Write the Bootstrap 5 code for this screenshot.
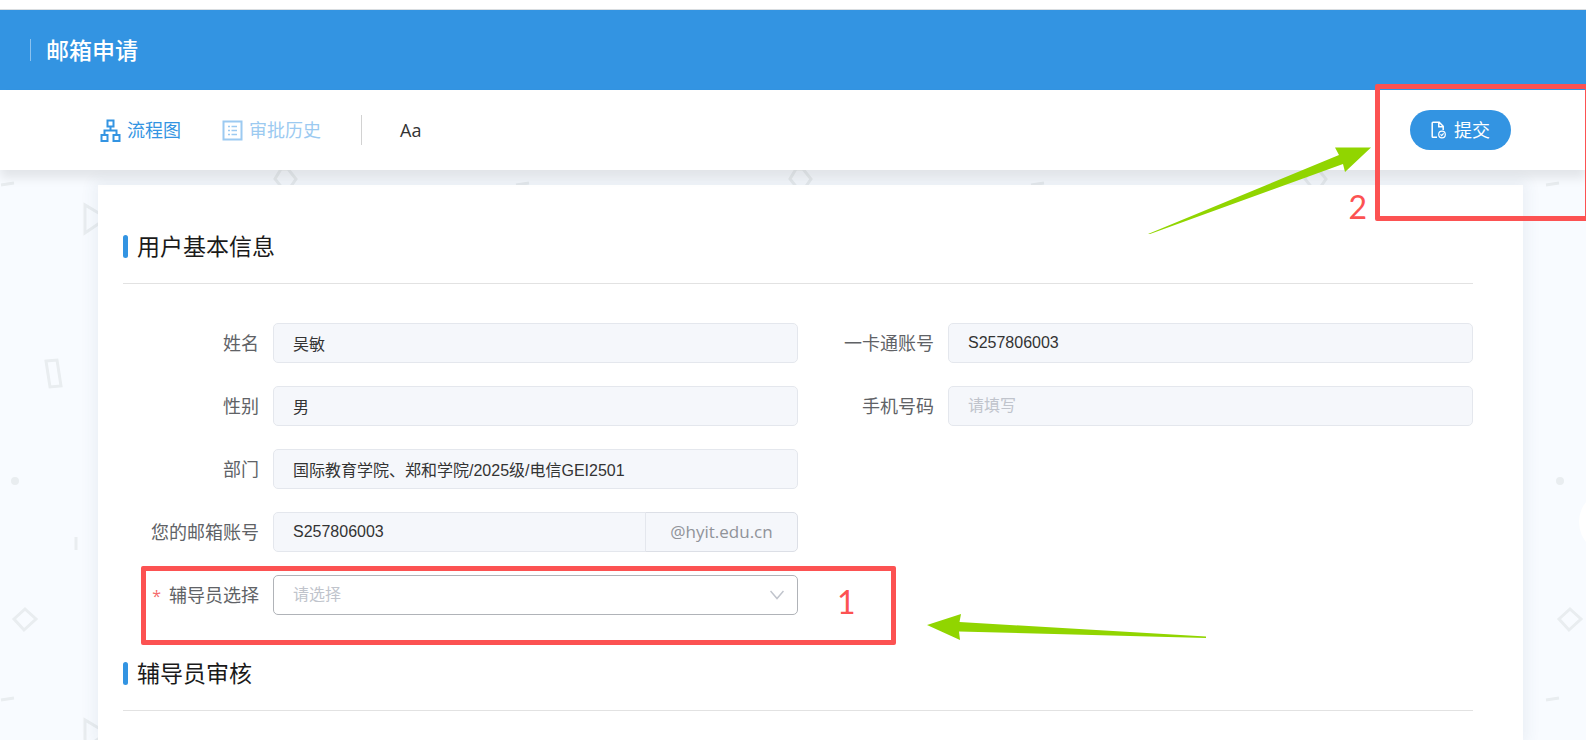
<!DOCTYPE html>
<html lang="zh-CN">
<head>
<meta charset="utf-8">
<meta name="viewport" content="width=device-width, initial-scale=1">
<title>邮箱申请</title>
<link href="https://cdn.jsdelivr.net/npm/bootstrap@5.3.0/dist/css/bootstrap.min.css" rel="stylesheet">
<style>
  :root { --brand: #3394e2; --mark-red: #fc5252; --mark-green: #91d500; }
  body { font-family: "Open Sans", "Noto Sans CJK SC", sans-serif; background: #fff; color: #1a1a1a; overflow-x: hidden; padding-top: 9px; }
  .app-header { height: 81px; border-top: 1px solid #d9dde0; background: var(--brand); color: #fff; padding-left: 30px; }
  .app-header h1 { font-size: 23px; line-height: 22px; font-weight: 500; border-left: 1px solid #8cc2ef; padding-left: 15px; margin: 0; }
  .toolbar { height: 80px; padding: 0 75px 0 100px; background: #fff; box-shadow: 0 8px 10px rgba(0, 0, 0, .09); z-index: 2; }
  .tool-btn { font-size: 18px; line-height: 24px; padding: 0; border: 0; background: none; color: var(--brand); display: flex; align-items: center; gap: 6px; }
  .tool-btn.is-off { color: #9ccaf1; margin-left: 41px; }
  .tool-sep { width: 1px; height: 30px; background: #d2d2d2; margin: 0 38px 0 40px; }
  .tool-btn.tool-font { color: #333; }
  .submit-btn { height: 40px; width: 101px; font-size: 18px; line-height: 24px; background: var(--brand); color: #fff; border: 0; }
  .submit-btn:hover { background: #2484d2; color: #fff; }
  .page-area { padding: 15px 63px 0 98px;
    background: #f8fbff url("data:image/svg+xml,%3Csvg xmlns='http://www.w3.org/2000/svg' width='515' height='515' fill='none' stroke='%23e9edf0' stroke-width='3'%3E%3Cpath d='M1 15l13-2M85 35v28l22-15zM46 191l11-1 4 26-11 1zM76 367v13M25 439l11 10-12 11-10-11zM281 -1l-6 10 8 10h6l7-10-8-10z'/%3E%3Ccircle cx='15' cy='311' r='2' stroke-width='4'/%3E%3C/svg%3E") 0 0 / 515px 515px; }
  .sheet { background: #fff; padding: 49px 50px 26px 25px; box-shadow: 0 0 14px 4px rgba(60, 80, 110, .07); }
  .sec-title { font-size: 23px; line-height: 24px; font-weight: 400; margin: 0; padding-bottom: 25px; border-bottom: 1px solid #e2e2e2; }
  .sec-title::before { content: ""; width: 5px; height: 23px; border-radius: 3px; background: var(--brand); margin-right: 9px; }
  .form-rows { padding: 39px 0 46px; }
  .field-stack { row-gap: 23px; }
  .field-label { width: 150px; padding-right: 14px; font-size: 18px; line-height: 24px; color: #606266; text-align: right; }
  .field-label .req { color: #f56c6c; margin-right: 8px; font-size: 16px; }
  .field-box { height: 40px; padding: 0 19px; font-size: 16px; font-family: "Liberation Sans", "Noto Sans CJK SC", sans-serif; border: 1px solid #e4e7ed; border-radius: 5px; color: #333; }
  .field-box:disabled { background-color: #f5f7fb; color: #333; opacity: 1; }
  .field-box::placeholder { color: #c0c4cc; }
  .field-pick { background-color: #fff; border-color: #b0b3b8; color: #c0c4cc; appearance: none; width: 100%; }
  .pick-arrow { right: 14px; top: 13px; pointer-events: none; }
  .mail-end { width: 153px; font-size: 17px; color: #909399; background: #f5f7fb; border: 1px solid #dcdfe6; border-radius: 5px; padding: 0; justify-content: center; }
  .mark-frame { border: 5px solid var(--mark-red); border-radius: 2px; pointer-events: none; }
  .mark-num { color: var(--mark-red); font-family: Lato, sans-serif; font-size: 32px; line-height: 32px; }
  .mark-arrow { fill: var(--mark-green); pointer-events: none; }
  .mark-one { left: 18px; top: -9px; width: 755px; height: 79px; }
  .num-one { left: 714px; top: 11px; }
  .arrow-one { left: 804px; top: 38px; }
  .mark-two { right: -4px; top: -6px; width: 215px; height: 137px; }
  .num-two { right: 219px; top: 101px; }
  .arrow-two { right: 215px; top: 56px; }
  .side-tab { right: -57px; top: 320px; width: 64px; height: 64px; background: #fff; }
</style>
</head>
<body class="d-flex flex-column min-vh-100">
<header class="app-header d-flex align-items-center"><h1>邮箱申请</h1></header>

<nav class="toolbar position-relative d-flex align-items-center">
  <button type="button" class="tool-btn">
    <svg width="21" height="23" viewBox="0 0 21 23" fill="none" stroke="currentColor" stroke-width="2"><path d="M7.500 1.500h6v6h-6zM1.500 16h6v6h-6zM13.500 16h6v6h-6zM10.500 7.500V11M4.500 16v-4.500h12V16"/></svg>
    流程图
  </button>
  <button type="button" class="tool-btn is-off">
    <svg width="21" height="21" viewBox="0 0 21 21" fill="none" stroke="currentColor"><path d="M1.500 1.500h18v18h-18z" stroke-width="2"/><path d="M6 6.500h2M9.500 6.500h5.500M6 10.500h2M9.500 10.500h5.500M6 14.500h2M9.500 14.500h5.500" stroke-width="1.500"/></svg>
    审批历史
  </button>
  <span class="tool-sep"></span>
  <button type="button" class="tool-btn tool-font">Aa</button>
  <button type="button" class="submit-btn btn rounded-pill ms-auto p-0 d-flex align-items-center justify-content-center gap-2">
    <svg width="15" height="18" viewBox="0 0 15 18" fill="none" stroke="currentColor" stroke-width="1.500"><path d="M6 16.200H2Q1.200 16.200 1.200 15.400V2Q1.200 1.200 2 1.200h6.200l4 4V9M7.800 1.500v4.200h4.400"/><circle cx="11" cy="13.500" r="3.300" stroke-width="1.200"/><path d="M9.500 13.400l1.200 1.200 1.900-2.200" stroke-width="1.200"/></svg>
    提交
  </button>
  <span class="mark-frame mark-two position-absolute"></span>
  <span class="mark-num num-two position-absolute">2</span>
  <svg class="mark-arrow arrow-two position-absolute" width="223" height="90" viewBox="0 0 223 90"><path d="M0 88L191 9 187 1.500H223L197 26 195 18 2 88z"/></svg>
</nav>

<main class="page-area position-relative overflow-hidden flex-fill d-flex">
  <form class="sheet flex-fill">
    <h2 class="sec-title d-flex align-items-center">用户基本信息</h2>
    <div class="form-rows row g-0">
      <div class="field-stack col-6 d-flex flex-column">
        <div class="d-flex align-items-center">
          <label class="field-label" for="f-name">姓名</label>
          <input id="f-name" class="field-box form-control flex-fill w-auto" value="吴敏" disabled>
        </div>
        <div class="d-flex align-items-center">
          <label class="field-label" for="f-sex">性别</label>
          <input id="f-sex" class="field-box form-control flex-fill w-auto" value="男" disabled>
        </div>
        <div class="d-flex align-items-center">
          <label class="field-label" for="f-dept">部门</label>
          <input id="f-dept" class="field-box form-control flex-fill w-auto" value="国际教育学院、郑和学院/2025级/电信GEI2501" disabled>
        </div>
        <div class="d-flex align-items-center">
          <label class="field-label" for="f-mail">您的邮箱账号</label>
          <div class="input-group flex-fill w-auto">
            <input id="f-mail" class="field-box form-control" value="S257806003" disabled>
            <span class="input-group-text mail-end">@hyit.edu.cn</span>
          </div>
        </div>
        <div class="d-flex align-items-center position-relative">
          <label class="field-label" for="f-tutor"><span class="req">*</span>辅导员选择</label>
          <div class="flex-fill position-relative">
            <select id="f-tutor" class="field-box field-pick"><option>请选择</option></select>
            <svg class="pick-arrow position-absolute" width="14" height="14" viewBox="0 0 14 14" fill="none" stroke="#c0c4cc" stroke-width="1.500"><path d="M.5 3L7 10.500 13.500 3"/></svg>
          </div>
          <span class="mark-frame mark-one position-absolute"></span>
          <span class="mark-num num-one position-absolute">1</span>
          <svg class="mark-arrow arrow-one position-absolute" width="280" height="28" viewBox="0 0 280 28"><path d="M0 12L34 1 32.500 9 279 23.500V25L32 18.500 33 27z"/></svg>
        </div>
      </div>
      <div class="field-stack col-6 d-flex flex-column">
        <div class="d-flex align-items-center">
          <label class="field-label" for="f-card">一卡通账号</label>
          <input id="f-card" class="field-box form-control flex-fill w-auto" value="S257806003" disabled>
        </div>
        <div class="d-flex align-items-center">
          <label class="field-label" for="f-tel">手机号码</label>
          <input id="f-tel" class="field-box form-control flex-fill w-auto" placeholder="请填写" disabled>
        </div>
      </div>
    </div>
    <h2 class="sec-title d-flex align-items-center">辅导员审核</h2>
  </form>
  <span class="side-tab position-absolute rounded-circle"></span>
</main>
<script src="https://cdn.jsdelivr.net/npm/bootstrap@5.3.0/dist/js/bootstrap.bundle.min.js"></script>
</body>
</html>
